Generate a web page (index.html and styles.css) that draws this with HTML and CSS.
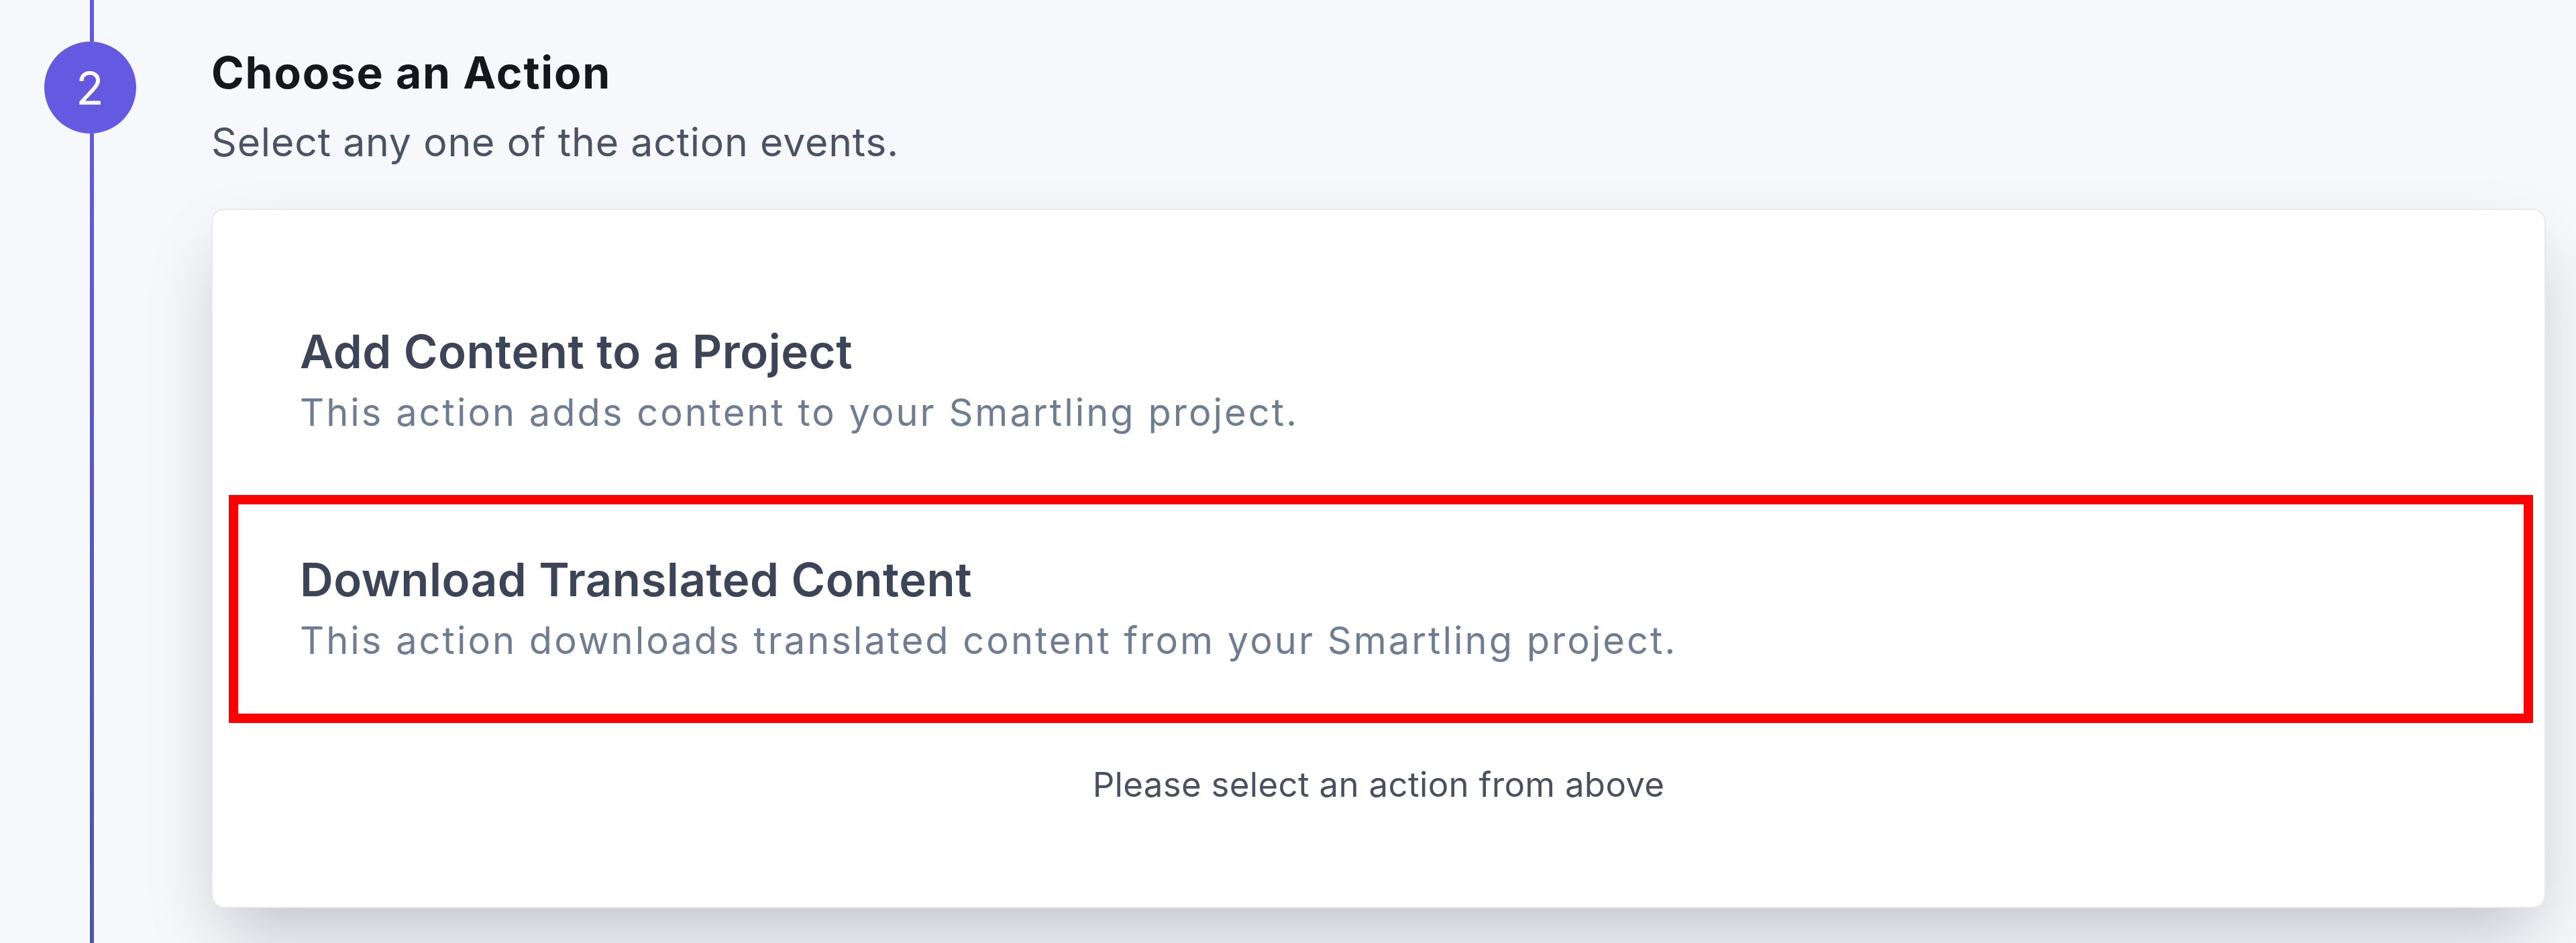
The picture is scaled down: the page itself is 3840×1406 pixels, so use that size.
FILE: index.html
```html
<!DOCTYPE html>
<html lang="en">
<head>
  <meta charset="UTF-8" />
  <meta name="viewport" content="width=device-width, initial-scale=1.0" />
  <title>Choose an Action</title>
  <link rel="stylesheet" href="styles.css">
</head>
<body>
  <div class="step">
    <div class="rail">
      <div class="line line-top"></div>
      <div class="badge">2</div>
      <div class="line line-bottom"></div>
    </div>

    <div class="content">
      <h2 class="step-title">Choose an Action</h2>
      <p class="step-sub">Select any one of the action events.</p>

      <div class="card">
        <div class="action">
          <h3>Add Content to a Project</h3>
          <p>This action adds content to your Smartling project.</p>
        </div>
        <!-- highlighted option -->
        <div class="action marked">
          <h3>Download Translated Content</h3>
          <p>This action downloads translated content from your Smartling project.</p>
        </div>
        <p class="hint">Please select an action from above</p>
      </div>
    </div>
  </div>
</body>
</html>
```

FILE: styles.css
```css
body {
  margin: 0;
  background-color: #f7f8fb;
  font-family: Inter, "Noto Sans", sans-serif;
  overflow: hidden;
}

.step {
  display: flex;
  min-height: 100vh;
  padding: 0 45px 0 65px;
  box-sizing: border-box;
}

.rail {
  width: 138px;
  display: flex;
  flex-direction: column;
  align-items: center;
  flex-shrink: 0;
}

.line {
  width: 6px;
  margin-left: 6px;
  background-color: #6558e0;
}

.line-top {
  height: 62px;
}

.line-bottom {
  flex: 1;
  background: linear-gradient(#6558e0, #4a58a0);
}

.badge {
  width: 137px;
  height: 137px;
  border-radius: 50%;
  background-color: #6459e1;
  color: #fff;
  font-size: 68px;
  display: flex;
  justify-content: center;
  align-items: center;
}

.content {
  flex: 1;
  margin-left: 112px;
}

.step-title {
  margin: 68px 0 0;
  font-size: 66px;
  line-height: 80px;
  font-weight: 700;
  letter-spacing: 1.75px;
  color: #15171c;
}

.step-sub {
  margin: 28px 0 0;
  font-size: 59px;
  line-height: 72px;
  letter-spacing: 0.8px;
  color: #4a5263;
}

.card {
  margin-top: 63px;
  height: 1043px;
  box-sizing: border-box;
  background-color: #fff;
  border: 2px solid #e8e9ee;
  border-radius: 20px;
  box-shadow: 0 50px 100px -20px rgba(20, 25, 45, 0.25);
  padding-top: 85px;
}

.action {
  height: 340px;
  box-sizing: border-box;
  margin: 0 17px 0 24px;
  border: 14px solid transparent;
  padding: 70px 92px 0;
}

.action.marked {
  border-color: #ff0000;
}

.action h3 {
  margin: 0;
  font-size: 69px;
  line-height: 84px;
  font-weight: 600;
  letter-spacing: 0.5px;
  color: #3c4457;
}

.action p {
  margin: 15px 0 0;
  font-size: 56px;
  line-height: 68px;
  letter-spacing: 3px;
  color: #6f7d93;
}

.hint {
  margin: 61px 0 0;
  text-align: center;
  font-size: 51px;
  line-height: 62px;
  letter-spacing: 0.3px;
  color: #4a5060;
}
```
